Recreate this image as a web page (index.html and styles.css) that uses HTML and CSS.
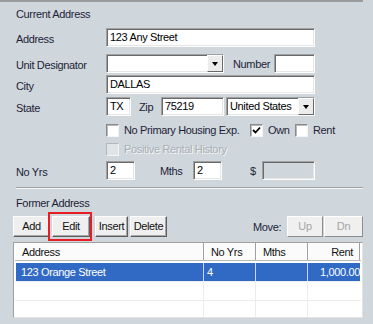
FILE: index.html
```html
<!DOCTYPE html>
<html>
<head>
<meta charset="utf-8">
<link rel="stylesheet" href="styles.css">
</head>
<body>
<div class="panel">
  <div class="title">Current Address</div>

  <div class="row r-address">
    <span class="lbl">Address</span>
    <div class="field w-address">123 Any Street</div>
  </div>

  <div class="row r-unit">
    <span class="lbl">Unit Designator</span>
    <div class="field select w-unit"><span class="val"></span><span class="drop"><i class="tri"></i></span></div>
    <span class="lbl-inline l-number">Number</span>
    <div class="field w-number"></div>
  </div>

  <div class="row r-city">
    <span class="lbl">City</span>
    <div class="field w-address">DALLAS</div>
  </div>

  <div class="row r-state">
    <span class="lbl">State</span>
    <div class="field w-tx">TX</div>
    <span class="lbl-inline l-zip">Zip</span>
    <div class="field w-zip">75219</div>
    <div class="field select w-country"><span class="val">United States</span><span class="drop"><i class="tri"></i></span></div>
  </div>

  <div class="checkrow r-checks">
    <label class="check c-housing"><span class="box"></span><span>No Primary Housing Exp.</span></label>
    <label class="check c-own"><span class="box"><svg width="9" height="9" viewBox="0 0 9 9"><path d="M1 4 L3.5 6.5 L8 1.5" fill="none" stroke="#000" stroke-width="1.8"/></svg></span><span>Own</span></label>
    <label class="check"><span class="box"></span><span>Rent</span></label>
  </div>

  <div class="checkrow r-positive">
    <label class="check disabled"><span class="box"></span><span>Positive Rental History</span></label>
  </div>

  <div class="row r-years">
    <span class="lbl">No Yrs</span>
    <div class="field w-small">2</div>
    <span class="lbl-inline l-mths">Mths</span>
    <div class="field w-small">2</div>
    <span class="lbl-inline l-dollar">$</span>
    <div class="field disabled-field w-dollar"></div>
  </div>

  <div class="separator"></div>

  <div class="title t-former">Former Address</div>

  <div class="toolbar">
    <button class="btn b-add">Add</button>
    <span class="highlight"><button class="btn b-edit">Edit</button></span>
    <button class="btn b-insert">Insert</button>
    <button class="btn b-delete">Delete</button>
    <span class="move-label">Move:</span>
    <button class="btn disabled b-up">Up</button>
    <button class="btn disabled b-dn">Dn</button>
  </div>

  <div class="list">
    <div class="list-head">
      <div class="hcell c-addr">Address</div>
      <div class="hcell c-yrs">No Yrs</div>
      <div class="hcell c-mths">Mths</div>
      <div class="hcell c-rent">Rent</div>
    </div>
    <div class="list-row selected">
      <div class="cell c-addr">123 Orange Street</div>
      <div class="cell c-yrs">4</div>
      <div class="cell c-mths"></div>
      <div class="cell c-rent">1,000.00</div>
    </div>
    <div class="list-row">
      <div class="cell c-addr"></div>
      <div class="cell c-yrs"></div>
      <div class="cell c-mths"></div>
      <div class="cell c-rent"></div>
    </div>
    <div class="list-row">
      <div class="cell c-addr"></div>
      <div class="cell c-yrs"></div>
      <div class="cell c-mths"></div>
      <div class="cell c-rent"></div>
    </div>
  </div>
</div>
</body>
</html>
```

FILE: styles.css
```css
* { box-sizing: border-box; }

body {
  margin: 0;
  width: 373px;
  height: 324px;
  overflow: hidden;
  background: #cfd6dc;
  font-family: "Liberation Sans", Arial, sans-serif;
  font-size: 11px;
  letter-spacing: -0.35px;
  color: #1e1e38;
}

.panel {
  width: 363px;
  border-top: 2px solid #9c9c9c;
  padding-left: 16px;
}

.title {
  margin-top: 6px;
  height: 13px;
  line-height: 13px;
}

.row {
  display: flex;
  align-items: flex-start;
  height: 19px;
}

.r-address { margin-top: 7px; }
.r-unit { margin-top: 7px; }
.r-city { margin-top: 2px; }
.r-state { margin-top: 3px; }
.r-years { margin-top: 5px; }

.lbl {
  width: 90px;
  flex: none;
  padding-top: 5px;
  line-height: 13px;
}

.lbl-inline {
  flex: none;
  padding-top: 4px;
  line-height: 13px;
}

.l-number { margin-left: 9px; width: 41px; }
.l-zip { margin-left: 8px; width: 22px; }
.l-mths { margin-left: 25px; width: 33px; }
.l-dollar { margin-left: 28px; width: 12px; }

.field {
  flex: none;
  height: 19px;
  background: #fff;
  border: 1px solid;
  border-color: #a0a0a0 #fdfdfd #fdfdfd #a0a0a0;
  box-shadow: inset 1px 1px 0 #6a6a6a, inset -1px -1px 0 #e6e6e6;
  padding: 2px 0 0 3px;
  line-height: 13px;
  white-space: nowrap;
  overflow: hidden;
  color: #000;
}

.w-address { width: 209px; }
.w-unit { width: 118px; }
.w-number { width: 41px; }
.w-tx { width: 25px; }
.w-zip { width: 63px; }
.w-country { width: 89px; margin-left: 2px; }
.w-small { width: 29px; }
.w-dollar { width: 53px; }

.disabled-field {
  background: #cfd6dc;
}

.select {
  display: flex;
  padding: 0;
}

.select .val {
  flex: 1;
  padding: 2px 0 0 3px;
  overflow: hidden;
}

.select .drop {
  flex: none;
  width: 16px;
  height: 17px;
  margin: 0 0 0 0;
  background: #ececec;
  border: 1px solid;
  border-color: #fdfdfd #696969 #696969 #fdfdfd;
  display: flex;
  align-items: center;
  justify-content: center;
}

.tri {
  width: 0;
  height: 0;
  border-left: 3.5px solid transparent;
  border-right: 3.5px solid transparent;
  border-top: 4px solid #000;
  margin-top: 1px;
}

.checkrow {
  display: flex;
  align-items: center;
  height: 13px;
  padding-left: 90px;
}

.r-checks { margin-top: 8px; }
.r-positive { margin-top: 6px; }

.check {
  display: flex;
  align-items: center;
  line-height: 13px;
}

.check .box {
  width: 13px;
  height: 13px;
  flex: none;
  margin-right: 5px;
  background: #fff;
  border: 1px solid;
  border-color: #8a8a8a #f4f4f4 #f4f4f4 #8a8a8a;
  box-shadow: inset 1px 1px 0 #b9b9b9;
  display: flex;
  align-items: center;
  justify-content: center;
}

.c-housing { width: 144px; }
.c-own { width: 45px; }

.check.disabled {
  color: #a9aeb2;
  text-shadow: 1px 1px 0 #f4f6f8;
}

.check.disabled .box {
  background: #e1e4e7;
  border-color: #b3b7bb #f4f4f4 #f4f4f4 #b3b7bb;
  box-shadow: none;
}

.separator {
  margin-top: 7px;
  width: 347px;
  border-top: 1px solid #9f9f9f;
  border-bottom: 1px solid #f6f8fa;
}

.t-former { margin-top: 8px; }

.toolbar {
  display: flex;
  align-items: center;
  margin-top: 6px;
  margin-left: -3px;
  height: 21px;
}

.btn {
  flex: none;
  height: 21px;
  padding: 0;
  font: inherit;
  letter-spacing: inherit;
  color: #111;
  background: #efefef;
  border: 1px solid;
  border-color: #fdfdfd #5e5e5e #5e5e5e #fdfdfd;
  box-shadow: inset -1px -1px 0 #a7a7a7;
  text-align: center;
  line-height: 13px;
}

.b-add { width: 37px; }
.b-edit { width: 38px; }
.b-insert { width: 33px; margin-left: 5px; }
.b-delete { width: 37px; margin-left: 2px; }
.b-up { width: 36px; margin-left: 4px; }
.b-dn { width: 39px; margin-left: 1px; }

.btn.disabled {
  color: #a6a6a6;
  background: #f0f0f0;
  border-color: #fdfdfd #8d8d8d #8d8d8d #fdfdfd;
  box-shadow: none;
}

.highlight {
  position: relative;
  display: flex;
  margin-left: 2px;
}

.highlight::after {
  content: "";
  position: absolute;
  left: -4px;
  right: -2px;
  top: -4px;
  bottom: -4px;
  border: 2px solid #e81c24;
}

.move-label {
  margin-left: 86px;
  width: 30px;
}

.list {
  margin-top: 5px;
  margin-left: -3px;
  width: 350px;
  height: 76px;
  overflow: hidden;
  background: #fff;
  border: 1px solid;
  border-color: #a0a0a0 #e3e3e3 #e3e3e3 #a0a0a0;
  padding: 0 1px 0 1px;
}

.list-head {
  display: flex;
  height: 18px;
  border-bottom: 1px solid #b8b8b8;
}

.hcell {
  flex: none;
  height: 17px;
  line-height: 15px;
  padding: 2px 6px 0 6px;
  background: #fbfbfb;
  border-left: 1px solid #ffffff;
  border-right: 1px solid #a0a0a0;
  color: #111;
  white-space: nowrap;
}

.c-addr { width: 189px; }
.c-yrs { width: 52px; }
.c-mths { width: 52px; }
.c-rent { width: 52px; }

.hcell.c-rent { text-align: right; }

.list-row {
  display: flex;
  height: 19px;
  margin-top: 0;
  border-bottom: 1px solid #ececec;
}

.list-row:first-of-type { }

.list-head + .list-row {
  margin-top: 2px;
}

.cell {
  flex: none;
  height: 18px;
  line-height: 18px;
  padding-left: 3px;
  border-right: 1px solid #ececec;
  white-space: nowrap;
  overflow: hidden;
  color: #000;
}

.cell.c-addr { padding-left: 5px; margin-left: 1px; width: 188px; }
.cell.c-rent { text-align: right; padding-left: 0; padding-right: 0; border-right: none; }

.list-row.selected .cell {
  background: #316ac5;
  color: #fff;
  border-right-color: #c9d8ef;
}
```
